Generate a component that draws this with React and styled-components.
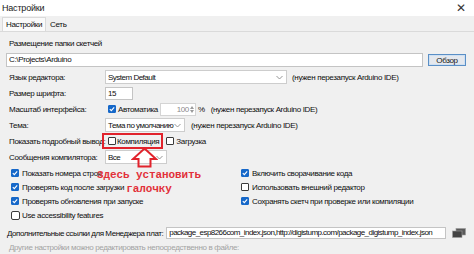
import React from 'react';
import styled, { createGlobalStyle } from 'styled-components';

const GlobalStyle = createGlobalStyle`
  body {
    margin: 0;
    background: #f0f0f0;
    font-family: "Liberation Sans", Arial, sans-serif;
    font-size: 8px;
    letter-spacing: -0.35px;
    color: #0e0e0e;
    overflow: hidden;
  }
`;

const Window = styled.div`
  position: relative;
  width: 474px;
  height: 254px;
  display: flex;
  flex-direction: column;
  overflow: hidden;
`;

const TitleBar = styled.div`
  height: 17px;
  background: #fff;
  display: flex;
  align-items: center;
  justify-content: space-between;
  padding: 0 8px 0 2px;
`;

const Title = styled.span`
  font-size: 9px;
  letter-spacing: -0.2px;
  color: #1a1a1a;
`;

const Close = styled.span`
  font-size: 12px;
  font-weight: 300;
  color: #333;
  letter-spacing: 0;
`;

const TabBar = styled.div`
  height: 15px;
  display: flex;
  align-items: flex-end;
  padding-left: 2px;
  border-bottom: 1px solid #dadada;
`;

const Tab = styled.div`
  height: 13px;
  line-height: 13px;
  padding: 0 3px;
  background: ${p => (p.$active ? '#fafafa' : 'transparent')};
  border: 1px solid ${p => (p.$active ? '#dadada' : 'transparent')};
  border-bottom: none;
`;

const Panel = styled.div`
  flex: 1;
  padding: 7px 8px 0 6px;
`;

const FolderLabel = styled.div`
  line-height: 10px;
  padding-left: 3px;
  margin-bottom: 4px;
`;

const PathRow = styled.div`
  display: flex;
  align-items: center;
  gap: 5px;
`;

const TextBox = styled.div`
  box-sizing: border-box;
  width: ${p => p.$w || 'auto'};
  flex: ${p => (p.$grow ? '1 1 0' : 'none')};
  min-width: 0;
  height: ${p => p.$h || 14}px;
  line-height: ${p => (p.$h || 14) - 2}px;
  padding: 0 2px;
  letter-spacing: ${p => (p.$tight ? '-0.55px' : 'inherit')};
  background: #fff;
  border: 1px solid #c4c4c4;
  white-space: nowrap;
  overflow: hidden;
`;

const Button = styled.button`
  box-sizing: border-box;
  width: 38px;
  height: 12px;
  padding: 0;
  font: inherit;
  letter-spacing: -0.35px;
  color: #141414;
  background: #e4e8ee;
  border: 1px solid #5a8fc6;
  box-shadow: inset 0 0 0 1px #cfe0f2;
`;

const Form = styled.div`
  margin-top: 2px;
  display: grid;
  grid-template-columns: 99px 1fr;
  grid-auto-rows: 16px;
  align-items: center;
`;

const Label = styled.div`
  padding-left: 3px;
  white-space: nowrap;
`;

const Controls = styled.div`
  display: flex;
  align-items: center;
  white-space: nowrap;
`;

const SelectBox = styled.div`
  box-sizing: border-box;
  width: ${p => p.$w}px;
  height: 14px;
  padding: 0 3px 0 2px;
  display: flex;
  align-items: center;
  justify-content: space-between;
  letter-spacing: -0.5px;
  background: #fff;
  border: 1px solid #cdcdcd;
  overflow: hidden;
`;

const Note = styled.span`
  margin-left: ${p => p.$gap || 5}px;
`;

const Spin = styled.div`
  box-sizing: border-box;
  width: 36px;
  height: 13px;
  margin-left: 2px;
  display: flex;
  align-items: center;
  justify-content: flex-end;
  gap: 1px;
  padding-right: 1px;
  color: #8a8a8a;
  background: #fff;
  border: 1px solid #d4d4d4;
`;

const SpinArrows = styled.div`
  display: flex;
  flex-direction: column;
  gap: 1px;
`;

const RedBox = styled.div`
  box-sizing: border-box;
  height: 16px;
  margin-left: -3px;
  padding: 0 2px 0 4px;
  display: flex;
  align-items: center;
  border: 2px solid #e1232c;
`;

const CheckItem = styled.label`
  display: flex;
  align-items: center;
  gap: ${p => p.$gap ?? 2}px;
  margin-left: ${p => p.$ml || 0}px;
  white-space: nowrap;
`;

const Box = styled.span`
  box-sizing: border-box;
  width: ${p => p.$size || 8}px;
  height: ${p => p.$size || 8}px;
  border-radius: ${p => (p.$round ? 2 : 1)}px;
  display: inline-flex;
  align-items: center;
  justify-content: center;
  background: ${p => (p.$checked ? '#1668c9' : '#fff')};
  border: 1px solid ${p => (p.$checked ? '#1668c9' : '#3a3a3a')};
  flex: none;
`;

const Options = styled.div`
  margin-top: 1px;
  display: grid;
  grid-template-columns: 230px 1fr;
  grid-template-rows: 14px 14px 14px 15px;
  align-items: center;
  padding-left: 5px;
`;

const BoardsRow = styled.div`
  margin-top: 4px;
  display: flex;
  align-items: center;
  gap: 3px;
  padding-left: 1px;
`;

const BoardsLabel = styled.span`
  flex: none;
  white-space: nowrap;
  letter-spacing: -0.45px;
`;

const IconButton = styled.span`
  margin-left: 3px;
  display: inline-flex;
  flex: none;
`;

const Hint = styled.div`
  margin-top: 3px;
  padding-left: 3px;
  line-height: 12px;
  color: #a3a3a3;
  white-space: nowrap;
`;

const Annotation = styled.div`
  position: absolute;
  left: 96px;
  top: 147px;
  width: 106px;
  display: flex;
  flex-direction: column;
  align-items: center;
  pointer-events: none;
`;

const Arrow = styled.svg`
  margin-left: -10px;
`;

const RedText = styled.div`
  font-family: "Liberation Mono", "DejaVu Sans Mono", monospace;
  font-size: 11px;
  font-weight: bold;
  letter-spacing: -0.1px;
  line-height: 14px;
  color: #e2303a;
  text-align: center;
  white-space: pre;
`;

const Chevron = () => (
  <svg width="7" height="5" viewBox="0 0 7 5" style={{ flex: 'none' }}>
    <path d="M0.5 1 L3.5 4 L6.5 1" fill="none" stroke="#8a8a8a" strokeWidth="0.9" />
  </svg>
);

const Check = ({ checked, size, round }) => (
  <Box $checked={checked} $size={size} $round={round}>
    {checked && (
      <svg width="6" height="6" viewBox="0 0 6 6">
        <path d="M0.8 3.1 L2.3 4.6 L5.2 1.3" fill="none" stroke="#fff" strokeWidth="1.1" />
      </svg>
    )}
  </Box>
);

const WindowsIcon = () => (
  <svg width="14" height="10" viewBox="0 0 14 10">
    <rect x="4" y="0.5" width="9.5" height="6.5" fill="#5a5a5a" stroke="#9a9a9a" strokeWidth="0.6" />
    <rect x="0.5" y="3" width="9.5" height="6.5" fill="#444" stroke="#a0a0a0" strokeWidth="0.6" />
  </svg>
);

export default function App() {
  return (
    <>
      <GlobalStyle />
      <Window>
        <TitleBar>
          <Title>Настройки</Title>
          <Close>✕</Close>
        </TitleBar>
        <TabBar>
          <Tab $active>Настройки</Tab>
          <Tab>Сеть</Tab>
        </TabBar>
        <Panel>
          <FolderLabel>Размещение папки скетчей</FolderLabel>
          <PathRow>
            <TextBox $grow>C:\Projects\Arduino</TextBox>
            <Button>Обзор</Button>
          </PathRow>

          <Form>
            <Label>Язык редактора:</Label>
            <Controls>
              <SelectBox $w={182}>System Default<Chevron /></SelectBox>
              <Note $gap={5}>(нужен перезапуск Arduino IDE)</Note>
            </Controls>

            <Label>Размер шрифта:</Label>
            <Controls>
              <TextBox $w="28px" $h={13}>15</TextBox>
            </Controls>

            <Label>Масштаб интерфейса:</Label>
            <Controls>
              <CheckItem $ml={3}><Check checked />Автоматика</CheckItem>
              <Spin>
                100
                <SpinArrows>
                  <svg width="4" height="3" viewBox="0 0 4 3"><path d="M0 3 L2 0 L4 3Z" fill="#9a9a9a" /></svg>
                  <svg width="4" height="3" viewBox="0 0 4 3"><path d="M0 0 L2 3 L4 0Z" fill="#9a9a9a" /></svg>
                </SpinArrows>
              </Spin>
              <Note $gap={2}>%</Note>
              <Note $gap={6}>(нужен перезапуск Arduino IDE)</Note>
            </Controls>

            <Label>Тема:</Label>
            <Controls>
              <SelectBox $w={80}>Тема по умолчанию<Chevron /></SelectBox>
              <Note $gap={6}>(нужен перезапуск Arduino IDE)</Note>
            </Controls>

            <Label>Показать подробный вывод:</Label>
            <Controls>
              <RedBox>
                <CheckItem $gap={1}><Check />Компиляция</CheckItem>
              </RedBox>
              <CheckItem $ml={3}><Check />Загрузка</CheckItem>
            </Controls>

            <Label>Сообщения компилятора:</Label>
            <Controls>
              <SelectBox $w={62}>Все<Chevron /></SelectBox>
            </Controls>
          </Form>

          <Options>
            <CheckItem $gap={3}><Check checked />Показать номера строк</CheckItem>
            <CheckItem $gap={3}><Check checked />Включить сворачивание кода</CheckItem>
            <CheckItem $gap={3}><Check checked />Проверять код после загрузки</CheckItem>
            <CheckItem $gap={3}><Check />Использовать внешний редактор</CheckItem>
            <CheckItem $gap={3}><Check checked />Проверять обновления при запуске</CheckItem>
            <CheckItem $gap={3}><Check checked />Сохранять скетч при проверке или компиляции</CheckItem>
            <CheckItem $gap={2}><Check size={9} round />Use accessibility features</CheckItem>
          </Options>

          <BoardsRow>
            <BoardsLabel>Дополнительные ссылки для Менеджера плат:</BoardsLabel>
            <TextBox $grow $tight $h={12}>package_esp8266com_index.json,http://digistump.com/package_digistump_index.json</TextBox>
            <IconButton><WindowsIcon /></IconButton>
          </BoardsRow>
          <Hint>Другие настройки можно редактировать непосредственно в файле:</Hint>
        </Panel>

        <Annotation>
          <Arrow width="27" height="21" viewBox="0 0 27 21">
            <path d="M13.5 1.5 L25 12 L19.5 12 L19.5 19.5 L7.5 19.5 L7.5 12 L2 12 Z" fill="none" stroke="#e1232c" strokeWidth="2" strokeLinejoin="miter" />
          </Arrow>
          <RedText>{'Здесь установить\nгалочку'}</RedText>
        </Annotation>
      </Window>
    </>
  );
}
